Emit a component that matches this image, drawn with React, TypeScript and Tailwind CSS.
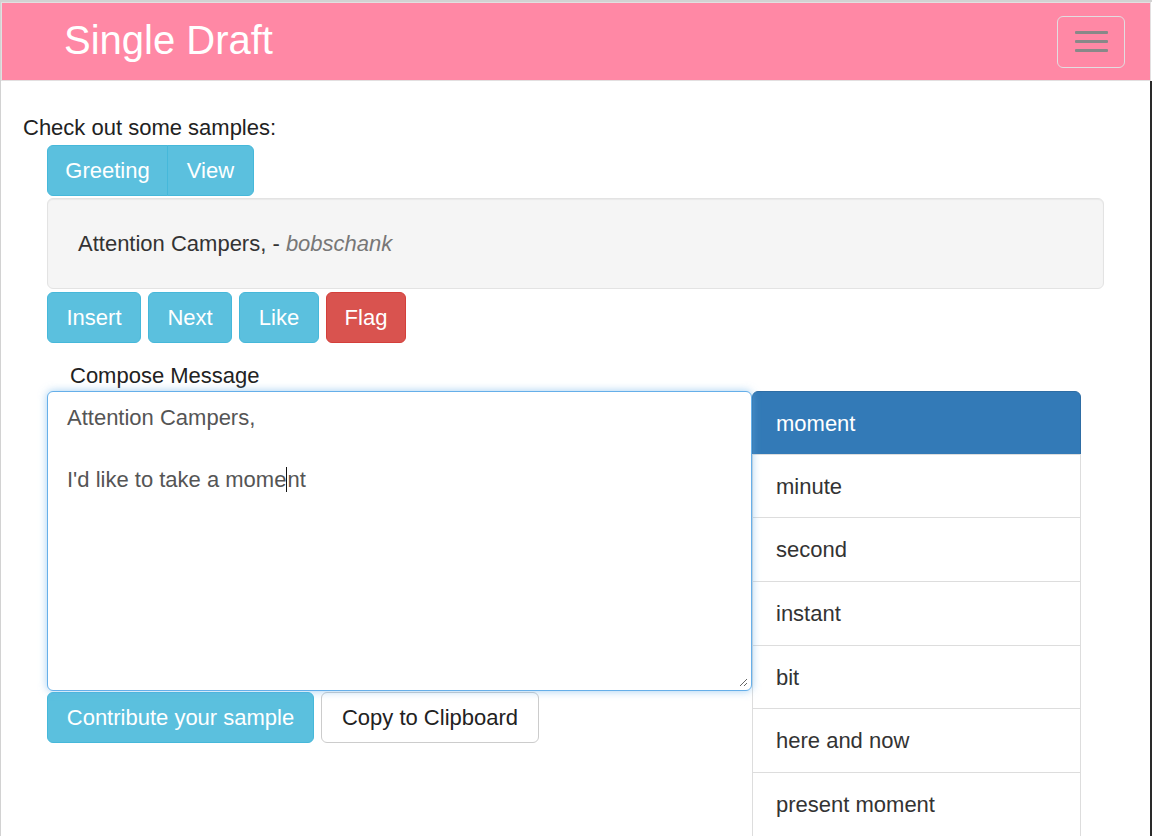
import React from "react";

const font = { fontFamily: '"Liberation Sans", Arial, Helvetica, sans-serif' };

const synonyms = [
  { word: "minute", h: "h-[64px]" },
  { word: "second", h: "h-[65px]" },
  { word: "instant", h: "h-[65px]" },
  { word: "bit", h: "h-[64px]" },
  { word: "here and now", h: "h-[65px]" },
  { word: "present moment", h: "h-[65px]" },
];

function InfoButton({ children, className = "" }: { children: React.ReactNode; className?: string }) {
  return (
    <button
      className={
        "h-[51px] text-[22px] leading-[30px] text-white bg-[#5bc0de] border border-[#46b8da] rounded-[6px] " +
        className
      }
    >
      {children}
    </button>
  );
}

export default function App() {
  return (
    <div
      className="w-[1152px] h-[836px] overflow-hidden bg-white border-t-2 border-l border-[#d2d2d2] flex flex-col text-[#333]"
      style={font}
    >
      <header className="h-[79px] shrink-0 bg-[#ff88a5] border border-[#e3dfe0] mr-[1px] flex items-center justify-between pl-[62px] pr-[25px]">
        <h1 className="text-[40px] leading-none text-white pb-[3px]">Single Draft</h1>
        <button className="w-[68px] h-[52px] border border-[#e2dde0] rounded-[6px] flex flex-col items-center justify-center gap-[6px]">
          <span className="block w-[33px] h-[3px] bg-[#888] rounded-[1px]" />
          <span className="block w-[33px] h-[3px] bg-[#888] rounded-[1px]" />
          <span className="block w-[33px] h-[3px] bg-[#888] rounded-[1px]" />
        </button>
      </header>

      <main className="flex-1 border-r-2 border-[#2a2a2a] pt-[32px] pl-[22px]">
        <p className="text-[22px] leading-[30px] text-[#222]">Check out some samples:</p>

        <div className="pl-[24px] mt-[2px]">
          <div className="flex">
            <InfoButton className="w-[121px] rounded-r-none">Greeting</InfoButton>
            <InfoButton className="w-[87px] -ml-px rounded-l-none">View</InfoButton>
          </div>

          <div className="mt-[2px] w-[1057px] h-[91px] bg-[#f5f5f5] border border-[#e3e3e3] rounded-[6px] flex items-center pl-[30px] text-[22px] text-[#333] shadow-[inset_0_1px_1px_rgba(0,0,0,0.05)]">
            <span>
              Attention Campers, - <em className="text-[#777]">bobschank</em>
            </span>
          </div>

          <div className="mt-[3px] flex gap-[7px]">
            <InfoButton className="w-[94px]">Insert</InfoButton>
            <InfoButton className="w-[84px]">Next</InfoButton>
            <InfoButton className="w-[80px]">Like</InfoButton>
            <button className="h-[51px] w-[80px] text-[22px] text-white bg-[#d9534f] border border-[#d43f3a] rounded-[6px]">
              Flag
            </button>
          </div>

          <label className="block mt-[18px] pl-[23px] text-[22px] leading-[30px] text-[#222]">Compose Message</label>

          <div className="flex items-start">
            <div className="w-[705px] shrink-0">
              <div className="relative h-[300px] border border-[#66afe9] rounded-[6px] bg-white shadow-[0_0_8px_rgba(102,175,233,0.6)] px-[19px] pt-[10px] text-[22px] leading-[31px] text-[#555]">
                <div>Attention Campers,</div>
                <div>&nbsp;</div>
                <div>
                  I'd like to take a mome
                  <span className="inline-block w-px h-[25px] bg-[#111] align-[-5px]" />
                  nt
                </div>
                <svg className="absolute right-[3px] bottom-[3px]" width="10" height="10" viewBox="0 0 10 10">
                  <path d="M9 2 L2 9 M9 6 L6 9" stroke="#666" strokeWidth="1" />
                </svg>
              </div>
              <div className="mt-px flex gap-[7px]">
                <InfoButton className="w-[267px]">Contribute your sample</InfoButton>
                <button className="h-[51px] w-[218px] text-[22px] text-[#222] bg-white border border-[#ccc] rounded-[6px]">
                  Copy to Clipboard
                </button>
              </div>
            </div>

            <ul className="w-[329px] shrink-0 text-[22px]">
              <li className="h-[64px] flex items-center pl-[23px] bg-[#337ab7] border border-[#2e6da4] rounded-t-[6px] text-white">
                moment
              </li>
              {synonyms.map((s) => (
                <li
                  key={s.word}
                  className={s.h + " -mt-px flex items-center pl-[23px] bg-white border border-[#ddd] text-[#333]"}
                >
                  {s.word}
                </li>
              ))}
            </ul>
          </div>
        </div>
      </main>
    </div>
  );
}
